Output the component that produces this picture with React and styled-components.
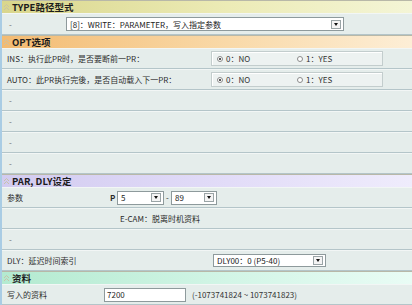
import React from "react";
import styled, { createGlobalStyle, css } from "styled-components";

const GlobalStyle = createGlobalStyle`
  html, body {
    margin: 0;
    padding: 0;
    background: #e4ecea;
  }
  body {
    font-family: "Noto Sans CJK SC", "DejaVu Sans", sans-serif;
    color: #2a2a2a;
  }
`;

// header tints per section
const tones = {
  type: ["#d9d68c", "#ecebb6", "#f4f5d6"],
  opt: ["#f3bb72", "#f9d9a8", "#fdeed6"],
  par: ["#d2cbf0", "#e2dcf8", "#efecfc"],
  data: ["#b3ead0", "#d2f5e6", "#e9fcf5"],
};

const Panel = styled.div`
  width: 412px;
  height: 305px;
  box-sizing: border-box;
  display: flex;
  flex-direction: column;
  background: #e5edeb;
  border-left: 2px solid #a9cce4;
  overflow: hidden;
`;

const Header = styled.div`
  height: 13px;
  flex: 0 0 13px;
  display: flex;
  align-items: center;
  gap: 2px;
  padding-left: 1px;
  box-sizing: border-box;
  font-size: 9.5px;
  font-weight: 700;
  color: #1c1c1c;
  border-top: 1px solid #b8b8a8;
  ${({ $tone }) => {
    const [a, b, c] = tones[$tone];
    return css`
      background: linear-gradient(to right, ${a} 0%, ${b} 55%, ${c} 100%);
    `;
  }}
`;

const Row = styled.div`
  height: ${({ $h }) => $h || 21}px;
  flex: 0 0 ${({ $h }) => $h || 21}px;
  box-sizing: border-box;
  display: flex;
  align-items: center;
  padding-left: 5px;
  font-size: 8px;
  background: #e5edeb;
  border-top: 1px solid #f2f6f5;
  border-bottom: 1px solid #b4c5c9;
  white-space: nowrap;
`;

const Label = styled.span`
  flex: 0 0 ${({ $w }) => $w}px;
  color: #2e2e2e;
`;

const Dash = styled.span`
  color: #666;
  font-size: 8px;
  padding-left: 2px;
`;

const SelectBox = styled.div`
  width: ${({ $w }) => $w}px;
  height: ${({ $h }) => $h || 14}px;
  box-sizing: border-box;
  display: flex;
  align-items: center;
  background: #ffffff;
  border: 1px solid #8e9a9c;
  padding-left: 3px;
  font-size: 8px;
  color: #222;
`;

const SelectText = styled.span`
  flex: 1;
  overflow: hidden;
`;

const ArrowBtn = styled.span`
  width: 10px;
  height: 9px;
  margin-right: 2px;
  box-sizing: border-box;
  border: 1px solid #9aa4a6;
  background: #f4f4f4;
  display: flex;
  align-items: center;
  justify-content: center;
  &::after {
    content: "";
    border-left: 2.5px solid transparent;
    border-right: 2.5px solid transparent;
    border-top: 3px solid #111;
  }
`;

const RadioGroup = styled.div`
  width: 172px;
  height: 15px;
  box-sizing: border-box;
  display: flex;
  align-items: center;
  background: #edf2f1;
  border: 1px solid #c3cdcd;
  box-shadow: inset 1px 1px 0 #ffffff;
  padding-left: 5px;
`;

const RadioOption = styled.label`
  flex: 0 0 80px;
  display: flex;
  align-items: center;
  gap: 3px;
  font-size: 8px;
  color: #333;
`;

const RadioDot = styled.span`
  width: 6px;
  height: 6px;
  box-sizing: border-box;
  border-radius: 50%;
  border: 1px solid #8a8a8a;
  background: #fff;
  display: flex;
  align-items: center;
  justify-content: center;
  &::after {
    content: "";
    width: 2px;
    height: 2px;
    border-radius: 50%;
    background: ${({ $on }) => ($on ? "#222" : "transparent")};
  }
`;

const PMark = styled.span`
  font-weight: 700;
  font-size: 8px;
  width: 7px;
`;

const Sep = styled.span`
  width: 7px;
  text-align: center;
  font-size: 8px;
`;

const Input = styled.div`
  width: 82px;
  height: 14px;
  box-sizing: border-box;
  background: #fff;
  border: 1px solid #8e9a9c;
  padding-left: 2px;
  font-size: 8px;
  display: flex;
  align-items: center;
`;

const Hint = styled.span`
  margin-left: 6px;
  font-size: 8px;
  color: #333;
`;

const Note = styled.span`
  padding-left: 113px;
  font-size: 8px;
`;

function FoldIcon() {
  return (
    <svg width="7" height="8" viewBox="0 0 7 8">
      <path d="M1 4 L3.5 1.5 L6 4 M1 7 L3.5 4.5 L6 7" fill="none" stroke="#c8c2a8" strokeWidth="1" />
    </svg>
  );
}

function Section({ tone, title }) {
  return (
    <Header $tone={tone}>
      <FoldIcon />
      {title}
    </Header>
  );
}

function Select({ w, h, children }) {
  return (
    <SelectBox $w={w} $h={h}>
      <SelectText>{children}</SelectText>
      <ArrowBtn />
    </SelectBox>
  );
}

function Radios() {
  return (
    <RadioGroup>
      <RadioOption>
        <RadioDot $on />0：NO
      </RadioOption>
      <RadioOption>
        <RadioDot />1：YES
      </RadioOption>
    </RadioGroup>
  );
}

function BlankRow() {
  return (
    <Row>
      <Dash>-</Dash>
    </Row>
  );
}

export default function App() {
  return (
    <>
      <GlobalStyle />
      <Panel>
        <Section tone="type" title="TYPE路径型式" />
        <Row $h={22}>
          <Label $w={59}>
            <Dash>-</Dash>
          </Label>
          <Select w={278}>[8]：WRITE：PARAMETER，写入指定参数</Select>
        </Row>

        <Section tone="opt" title="OPT选项" />
        <Row>
          <Label $w={204}>INS：执行此PR时，是否要断前一PR：</Label>
          <Radios />
        </Row>
        <Row>
          <Label $w={204}>AUTO：此PR执行完後，是否自动载入下一PR：</Label>
          <Radios />
        </Row>
        <BlankRow />
        <BlankRow />
        <BlankRow />
        <BlankRow />

        <Section tone="par" title="PAR, DLY设定" />
        <Row>
          <Label $w={103}>参数</Label>
          <PMark>P</PMark>
          <Select w={47}>5</Select>
          <Sep>-</Sep>
          <Select w={46}>89</Select>
        </Row>
        <Row>
          <Note>E-CAM：脱离时机资料</Note>
        </Row>
        <BlankRow />
        <Row>
          <Label $w={206}>DLY：延迟时间索引</Label>
          <Select w={113} h={13}>DLY00：0 (P5-40)</Select>
        </Row>

        <Section tone="data" title="资料" />
        <Row>
          <Label $w={97}>写入的资料</Label>
          <Input>7200</Input>
          <Hint>(-1073741824 ~ 1073741823)</Hint>
        </Row>
      </Panel>
    </>
  );
}
